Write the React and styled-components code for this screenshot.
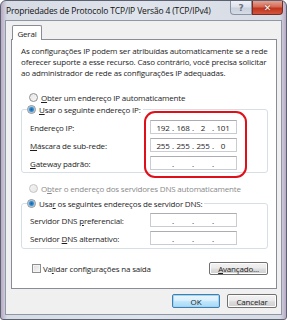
import React from "react";
import styled, { createGlobalStyle } from "styled-components";

const FONT = `"Open Sans", "Noto Sans", sans-serif`;

const Global = createGlobalStyle`
  html, body { margin: 0; padding: 0; background: #ffffff; }
  body { font-family: ${FONT}; }
  * { box-sizing: border-box; }
`;

const Window = styled.div`
  position: relative;
  width: 287px;
  height: 320px;
  border: 1px solid #5b6170;
  border-radius: 6px 6px 3px 3px;
  background: linear-gradient(90deg, #b9aac4 0px, #d6dbe4 6px, #dfe4ec 50%, #d6dbe4 calc(100% - 6px), #b9aac4 100%);
  display: flex;
  flex-direction: column;
  padding: 0 4px 5px 4px;
  font-family: ${FONT};
  font-size: 8px;
  letter-spacing: -0.18px;
`;

const TitleBar = styled.div`
  height: 19px;
  display: flex;
  align-items: flex-start;
  justify-content: space-between;
`;

const Title = styled.div`
  font-size: 8.5px;
  letter-spacing: -0.15px;
  color: #111;
  line-height: 19px;
  padding-left: 1px;
  white-space: nowrap;
`;

const Caption = styled.div`
  display: flex;
  margin-right: -1px;
`;

const CapButton = styled.div`
  width: ${(p) => p.$w}px;
  height: 14px;
  display: flex;
  align-items: center;
  justify-content: center;
  border: 1px solid ${(p) => (p.$close ? "#7c2b22" : "#8a93a3")};
  border-top: none;
  border-radius: ${(p) => (p.$close ? "0 0 4px 0" : "0 0 0 4px")};
  background: ${(p) =>
    p.$close
      ? "linear-gradient(#e4a293 0%, #d56a55 45%, #c2341c 55%, #d0563f 100%)"
      : "linear-gradient(#eef1f6 0%, #dde3ec 45%, #c9d1dd 55%, #d5dce6 100%)"};
  color: ${(p) => (p.$close ? "#fff" : "#6b7380")};
  font-size: 9px;
  font-weight: bold;
  font-family: "DejaVu Sans", sans-serif;
  text-shadow: ${(p) => (p.$close ? "0 0 2px #5a1a10" : "none")};
`;

const Content = styled.div`
  flex: 1;
  background: #f0f0f0;
  border: 1px solid #8d97a6;
  padding: 4px 4px 6px 5px;
  display: flex;
  flex-direction: column;
`;

const TabStrip = styled.div`
  display: flex;
  padding-left: 1px;
  height: 14px;
`;

const Tab = styled.div`
  width: 30px;
  height: 15px;
  background: #fff;
  border: 1px solid #898c95;
  border-bottom: none;
  border-radius: 2px 2px 0 0;
  color: #222;
  display: flex;
  align-items: center;
  justify-content: center;
  position: relative;
  z-index: 1;
  margin-bottom: -1px;
`;

const Panel = styled.div`
  background: #fff;
  border: 1px solid #898c95;
  height: 250px;
  padding: 5px 8px 0 9px;
  display: flex;
  flex-direction: column;
  position: relative;
`;

const Desc = styled.div`
  line-height: 11px;
  color: #1e1e1e;
  white-space: nowrap;
`;

const RadioRow = styled.label`
  display: flex;
  align-items: center;
  height: 12px;
  margin-top: ${(p) => p.$mt || 0}px;
  padding-left: ${(p) => p.$pl ?? 7}px;
  color: ${(p) => (p.$disabled ? "#8a8a8a" : "#1e1e1e")};
  white-space: nowrap;
  gap: 3px;
`;

const RadioDot = styled.span`
  width: 9px;
  height: 9px;
  border-radius: 50%;
  border: 1px solid ${(p) => (p.$disabled ? "#c4c4c4" : "#8e8f8f")};
  background: ${(p) =>
    p.$checked
      ? "radial-gradient(circle, #1b5f9c 0px, #3a8fd0 2px, #9ec8ea 3px, #f2f2f2 3.5px)"
      : p.$disabled
      ? "linear-gradient(135deg, #f4f4f4, #e6e6e6)"
      : "linear-gradient(135deg, #e8e8e8, #f6f6f6)"};
  flex: none;
`;

const U = styled.span`
  text-decoration: underline;
  text-underline-offset: 1px;
`;

const Group = styled.fieldset`
  margin: ${(p) => p.$mt || 0}px 0 0 0;
  width: 247px;
  border: 1px solid #d5dfe5;
  border-radius: 3px;
  padding: ${(p) => p.$pt}px 30px ${(p) => p.$pb}px 8px;
  display: flex;
  flex-direction: column;
  gap: ${(p) => p.$gap}px;
  min-width: 0;
`;

const Legend = styled.legend`
  padding: 0 2px 0 0;
  margin-left: -3px;
`;

const FieldRow = styled.div`
  display: flex;
  align-items: center;
  justify-content: space-between;
  height: 14px;
  color: #1e1e1e;
  white-space: nowrap;
`;

const IpBox = styled.div`
  width: 87px;
  height: 14px;
  border: 1px solid #c9ccd1;
  border-top-color: #abadb3;
  background: #fff;
  display: flex;
  align-items: center;
  padding-left: 4px;
  color: #1e1e1e;
`;

const Seg = styled.span`
  width: 16px;
  text-align: center;
`;

const Dot = styled.span`
  width: 4px;
  text-align: center;
`;

const BottomRow = styled.div`
  display: flex;
  align-items: center;
  justify-content: space-between;
  margin-top: 13px;
  height: 13px;
  padding: 0 0 0 11px;
`;

const CheckLabel = styled.label`
  display: flex;
  align-items: center;
  gap: 2px;
  color: #1e1e1e;
  white-space: nowrap;
`;

const CheckBox = styled.span`
  width: 9px;
  height: 9px;
  border: 1px solid #8e8f8f;
  background: linear-gradient(135deg, #dcdcdc, #f8f8f8);
  box-shadow: inset 0 0 0 1px #f4f4f4;
  flex: none;
`;

const Button = styled.div`
  width: ${(p) => p.$w}px;
  height: ${(p) => p.$h || 13}px;
  border: 1px solid ${(p) => (p.$default ? "#3c7fb1" : "#707070")};
  border-radius: 2px;
  background: ${(p) =>
    p.$default
      ? "linear-gradient(#eaf6fd 0%, #d9f0fc 45%, #bee6fd 55%, #a7d9f5 100%)"
      : "linear-gradient(#f2f2f2 0%, #ebebeb 45%, #dddddd 55%, #cfcfcf 100%)"};
  box-shadow: inset 0 0 0 1px ${(p) => (p.$default ? "#a6d2ef" : "#fcfcfc")};
  display: flex;
  align-items: center;
  justify-content: center;
  color: #1e1e1e;
`;

const Footer = styled.div`
  display: flex;
  justify-content: flex-end;
  gap: 7px;
  margin-top: 5px;
`;

const Highlight = styled.div`
  position: absolute;
  left: 132px;
  top: 71px;
  width: 103px;
  height: 67px;
  border: 2.5px solid #e0101a;
  border-radius: 11px;
  pointer-events: none;
`;

function Ip({ parts }) {
  return (
    <IpBox>
      <Seg>{parts[0]}</Seg>
      <Dot>.</Dot>
      <Seg>{parts[1]}</Seg>
      <Dot>.</Dot>
      <Seg>{parts[2]}</Seg>
      <Dot>.</Dot>
      <Seg>{parts[3]}</Seg>
    </IpBox>
  );
}

export default function App() {
  return (
    <>
      <Global />
      <Window>
        <TitleBar>
          <Title>Propriedades de Protocolo TCP/IP Versão 4 (TCP/IPv4)</Title>
          <Caption>
            <CapButton $w={22}>?</CapButton>
            <CapButton $w={31} $close>✕</CapButton>
          </Caption>
        </TitleBar>
        <Content>
          <TabStrip>
            <Tab>Geral</Tab>
          </TabStrip>
          <Panel>
            <Desc>
              As configurações IP podem ser atribuídas automaticamente se a rede
              <br />
              oferecer suporte a esse recurso. Caso contrário, você precisa solicitar
              <br />
              ao administrador de rede as configurações IP adequadas.
            </Desc>
            <RadioRow $mt={13} $pl={8}>
              <RadioDot />
              <span>
                <U>O</U>bter um endereço IP automaticamente
              </span>
            </RadioRow>
            <Group $pt={5} $pb={2} $gap={4}>
              <Legend>
                <RadioRow $pl={0}>
                  <RadioDot $checked />
                  <span>
                    <U>U</U>sar o seguinte endereço IP:
                  </span>
                </RadioRow>
              </Legend>
              <FieldRow>
                <span>Endereço IP:</span>
                <Ip parts={["192", "168", "2", "101"]} />
              </FieldRow>
              <FieldRow>
                <span>
                  <U>M</U>áscara de sub-rede:
                </span>
                <Ip parts={["255", "255", "255", "0"]} />
              </FieldRow>
              <FieldRow>
                <span>
                  <U>G</U>ateway padrão:
                </span>
                <Ip parts={["", "", "", ""]} />
              </FieldRow>
            </Group>
            <RadioRow $mt={9} $pl={8} $disabled>
              <RadioDot $disabled />
              <span>
                O<U>b</U>ter o endereço dos servidores DNS automaticamente
              </span>
            </RadioRow>
            <Group $mt={3} $pt={4} $pb={3} $gap={4}>
              <Legend>
                <RadioRow $pl={0}>
                  <RadioDot $checked />
                  <span>
                    Usa<U>r</U> os seguintes endereços de servidor DNS:
                  </span>
                </RadioRow>
              </Legend>
              <FieldRow>
                <span>
                  Servidor DNS <U>p</U>referencial:
                </span>
                <Ip parts={["", "", "", ""]} />
              </FieldRow>
              <FieldRow>
                <span>
                  Servidor <U>D</U>NS alternativo:
                </span>
                <Ip parts={["", "", "", ""]} />
              </FieldRow>
            </Group>
            <BottomRow>
              <CheckLabel>
                <CheckBox />
                <span>
                  Va<U>l</U>idar configurações na saída
                </span>
              </CheckLabel>
              <Button $w={59}>
                <span>
                  <U>A</U>vançado...
                </span>
              </Button>
            </BottomRow>
            <Highlight />
          </Panel>
          <Footer>
            <Button $w={48} $h={14} $default>OK</Button>
            <Button $w={50} $h={14}>Cancelar</Button>
          </Footer>
        </Content>
      </Window>
    </>
  );
}
